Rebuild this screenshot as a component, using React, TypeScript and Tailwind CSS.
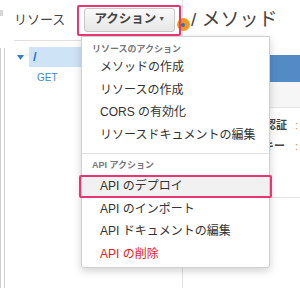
import React from "react";

const items1 = ["メソッドの作成", "リソースの作成", "CORS の有効化", "リソースドキュメントの編集"];

export default function App() {
  return (
    <div className="relative w-[300px] h-[288px] overflow-hidden bg-white font-['Liberation_Sans','Noto_Sans_CJK_JP',sans-serif] text-[#333]">
      <div className="flex h-full">
        {/* left edge stripe */}
        <div className="w-[5px] flex flex-col">
          <div className="mt-[10px] h-[6px] w-[3px] bg-[#d6d6d6]" />
          <div className="mt-[32px] flex-1 w-[5px] border-l border-r border-[#cfcfcf]" />
        </div>
        {/* resource panel */}
        <div className="w-[178px] flex flex-col border-r border-[#e2e2e2]">
          <div className="ml-[9px] h-[41px] flex items-center border-b border-[#e0e0e0]">
            <span className="text-[13px] text-[#444]">リソース</span>
            <button className="ml-[19px] mt-[-1px] w-[91px] h-[24px] rounded-[3px] border border-[#c8c8c8] bg-gradient-to-b from-[#fafafa] to-[#e6e6e6] text-[12.5px] font-bold text-[#444] flex items-center justify-center">
              アクション<span className="ml-[2px] text-[7px] text-[#555]">▼</span>
            </button>
          </div>
          <div className="mt-[6px] h-[20px] flex items-center">
            <svg width="7" height="5" viewBox="0 0 7 5" className="ml-[12px]">
              <path d="M0 0 L7 0 L3.5 5 Z" fill="#2f7fd0" />
            </svg>
            <div className="ml-[5px] flex-1 h-full bg-[#cfe3f7] flex items-center">
              <span className="ml-[4px] text-[13px] font-bold text-[#2a7ad2]">/</span>
            </div>
          </div>
          <div className="ml-[32px] mt-[3px] text-[10px] text-[#3d86d4]">GET</div>
        </div>
        {/* method pane */}
        <div className="flex-1 flex flex-col">
          <div className="h-[41px] flex items-center pl-[8px]">
            <span className="text-[19px] text-[#444] whitespace-nowrap">/ メソッド</span>
          </div>
          <div className="mt-[14px] h-[27px] bg-[#548bc6]" />
          <div className="h-[26px] bg-[#f6f6f6] border-b border-[#e3e3e3]" />
          <div className="h-[21px] mt-[7px] flex items-center justify-end pr-[2px] text-[11px]">
            <span className="font-bold text-[#444]">認証</span>
            <span className="ml-[8px] text-[#e8881c]">:</span>
          </div>
          <div className="h-[21px] flex items-center justify-end pr-[2px] text-[11px]">
            <span className="font-bold text-[#444]">キー</span>
            <span className="ml-[10px] text-[#e8881c]">:</span>
          </div>
          <div className="mt-[40px] border-b border-[#e3e3e3]" />
        </div>
      </div>

      {/* orange marker */}
      <div className="absolute left-[177px] top-[18px] w-[13px] h-[13px] rounded-full bg-[#f39a1e] flex items-center justify-center">
        <div className="w-[4px] h-[4px] rounded-full bg-[#2e6fc0] ml-[-1px]" />
      </div>

      {/* dropdown menu */}
      <div className="absolute left-[81px] top-[36px] w-[189px] h-[232px] bg-white border border-[#d0d0d0] rounded-b-[3px] shadow-[0_3px_8px_rgba(0,0,0,0.18)] flex flex-col">
        <div className="h-[19px] flex items-end pl-[10px] text-[9px] font-bold text-[#777]">リソースのアクション</div>
        {items1.map((t) => (
          <div key={t} className="h-[22.5px] flex items-center pl-[18px] text-[12px] text-[#333] whitespace-nowrap">{t}</div>
        ))}
        <div className="mt-[7px] border-t border-[#e2e2e2]" />
        <div className="h-[21px] flex items-center pl-[10px] pt-[3px] text-[9px] font-bold text-[#777]">API アクション</div>
        <div className="h-[22.5px] flex items-center pl-[18px] text-[12px] text-[#333] bg-[#f1f1f1]">API のデプロイ</div>
        <div className="h-[22.5px] flex items-center pl-[18px] text-[12px] text-[#333]">API のインポート</div>
        <div className="h-[22.5px] flex items-center pl-[18px] text-[12px] text-[#333]">API ドキュメントの編集</div>
        <div className="h-[22.5px] flex items-center pl-[18px] text-[12px] text-[#e8211b]">API の削除</div>
      </div>

      {/* pink annotation boxes */}
      <div className="absolute left-[77px] top-[5px] w-[104px] h-[31px] border-2 border-[#ea3670] rounded-[2px]" />
      <div className="absolute left-[79px] top-[175px] w-[193px] h-[23px] border-2 border-[#ea3670] rounded-[2px]" />
    </div>
  );
}
